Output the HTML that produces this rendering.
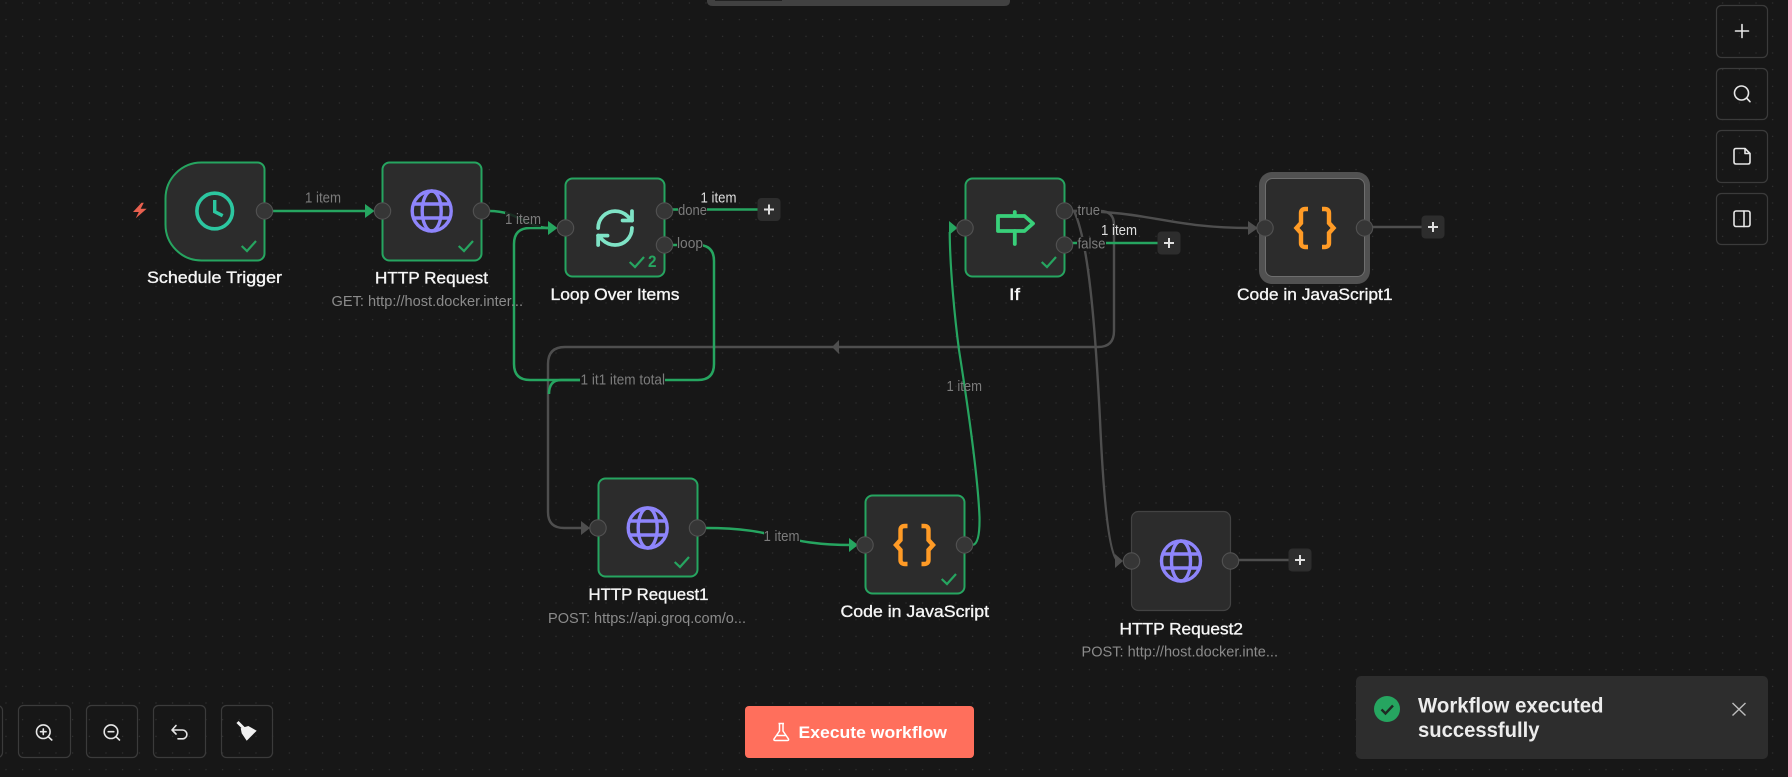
<!DOCTYPE html>
<html><head><meta charset="utf-8"><title>Workflow</title>
<style>
html,body{margin:0;padding:0;background:#171717;width:1792px;height:777px;overflow:hidden}
svg{display:block}
text{font-family:"Liberation Sans",sans-serif}
.n{fill:#2c2c2c;stroke:#26a560;stroke-width:2}
.h{fill:#363636;stroke:#525252;stroke-width:1.1}
.e{fill:none;stroke:#26a560;stroke-width:2.5}
.g{fill:none;stroke:#4e4e4e;stroke-width:2.4}
.t{font-size:17px;fill:#f6f6f6;stroke:#f6f6f6;stroke-width:.35}
.s{font-size:15px;fill:#8b8b8b}
.l{font-size:15px;fill:#7c7c7c}
.lw{font-size:15px;fill:#dedede}
.b{fill:none;stroke:#3b3b3b;stroke-width:1.2}
.i{fill:none;stroke:#e6e6e6;stroke-width:1.6;stroke-linecap:round;stroke-linejoin:round}
.p{fill:#2d2d2d}
.pi{stroke:#e0e0e0;stroke-width:2;fill:none}
</style></head>
<body>
<svg width="1792" height="777" viewBox="0 0 1792 777" xmlns="http://www.w3.org/2000/svg">
<defs>
<pattern id="d" width="16.667" height="16.667" patternUnits="userSpaceOnUse" x="5" y="2"><circle cx="1" cy="1" r=".6" fill="#383838"/></pattern>
<g id="ck"><polyline points="-14.3,-5 -9,0 0,-10" fill="none" stroke="#26a560" stroke-width="2.200"/></g>
<g id="globe" fill="none" stroke="#8e85fb" stroke-width="3.400"><ellipse cx="0" cy="0" rx="19.500" ry="20"/><ellipse cx="0" cy="0" rx="9.500" ry="20"/><path d="M-18 -7H18M-18 7H18"/></g>
<g id="br" fill="none" stroke="#ff9b26" stroke-width="4.400"><path d="M-7 -19H-9.500Q-14 -19 -14 -15V-5L-18.500 0L-14 5V15Q-14 19 -9.500 19H-7"/><path d="M7 -19H9.500Q14 -19 14 -15V-5L18.500 0L14 5V15Q14 19 9.500 19H7"/></g>
<g id="plus"><rect x="-11.500" y="-11.500" width="23" height="23" rx="4" class="p"/><path d="M-5 0H5M0 -5V5" class="pi"/></g>
</defs>
<rect width="1792" height="777" fill="#171717"/>
<rect width="1792" height="777" fill="url(#d)"/>

<!-- top bar -->
<path d="M707 0H1010V1Q1010 6 1004 6H713Q707 6 707 1Z" fill="#414141"/>
<rect x="715" y="0" width="67" height="1" fill="#222"/>

<!-- gray edges -->
<path class="g" d="M1072 211H1100Q1114 211 1114 225V331Q1114 347 1098 347H565Q548 347 548 364V512Q548 528 564 528H582"/>
<path class="g" d="M1072 211C1150 211 1170 228 1250 228"/>
<path class="g" d="M1074 211C1088 240 1095 320 1100 420C1104 510 1110 557 1118 561"/>
<path class="g" d="M1372 227H1422M1239 560H1289"/>
<polygon points="832,347 839,340 839,354" fill="#4e4e4e"/>
<polygon points="581,521 590,528 581,535" fill="#4e4e4e"/>
<polygon points="1248,221 1258,228 1248,235" fill="#4e4e4e"/>
<polygon points="1115,554 1123,561 1115,568" fill="#4e4e4e"/>

<!-- green edges -->
<path class="e" d="M272 211H366"/>
<polygon points="365,204 374.500,211 365,218" fill="#26a560"/>
<path class="e" d="M489 211C520 211 525 228 550 228"/>
<path class="e" d="M672 245H698Q714 245 714 261V364Q714 380 698 380H530Q514 380 514 364V244Q514 228 530 228H550"/>
<polygon points="548,221 557.500,228 548,235" fill="#26a560"/>
<path class="e" d="M580 380H561Q549 380 549 394"/>
<path class="e" d="M672 209.500H758"/>
<path class="e" d="M1072 243H1158"/>
<path class="e" d="M706 528C780 528 780 545 852 545"/>
<polygon points="849,538 858,545 849,552" fill="#26a560"/>
<path d="M973 545Q980 543 979.500 517C978 480 970 420 959 350C955 320 950 270 949.700 232" fill="none" stroke="#26a560" stroke-width="2.200"/>
<polygon points="949,221 957.500,228 949,235" fill="#26a560"/>

<!-- label backgrounds -->
<rect x="505" y="212" width="36" height="15" fill="#171717" opacity=".85"/>
<rect x="764" y="530" width="36" height="14" fill="#171717"/>
<rect x="580" y="373" width="85" height="15" fill="#171717"/>
<rect x="678" y="203" width="29" height="14" fill="#171717"/>
<rect x="677" y="238" width="26" height="14" fill="#171717"/>
<rect x="1077" y="204" width="24" height="14" fill="#171717"/>
<rect x="1077" y="237" width="29" height="14" fill="#171717"/>

<!-- nodes -->
<path class="n" d="M201.500 162.500H257.500A7 7 0 0 1 264.500 169.500V253.500A7 7 0 0 1 257.500 260.500H201.500A36 36 0 0 1 165.500 224.500V198.500A36 36 0 0 1 201.500 162.500Z"/>
<rect class="n" x="382.500" y="162.500" width="99" height="98" rx="7"/>
<rect class="n" x="565.500" y="178.500" width="99" height="98" rx="7"/>
<rect class="n" x="965.500" y="178.500" width="99" height="98" rx="7"/>
<rect x="1259" y="172" width="111" height="112" rx="13" fill="#515151"/>
<rect x="1265.500" y="178.500" width="99" height="98" rx="7" fill="#2c2c2c" stroke="#6e6e6e" stroke-width="1"/>
<rect class="n" x="598.500" y="478.500" width="99" height="98" rx="7"/>
<rect class="n" x="865.500" y="495.500" width="99" height="98" rx="7"/>
<rect x="1131.500" y="511.500" width="99" height="99" rx="7" fill="#2c2c2c" stroke="#434343" stroke-width="1.200"/>

<!-- handles -->
<g class="h">
<circle cx="264.500" cy="211" r="8.200"/><circle cx="382.500" cy="211" r="8.200"/><circle cx="481.500" cy="211" r="8.200"/>
<circle cx="565.500" cy="228" r="8.200"/><circle cx="664.500" cy="211" r="8.200"/><circle cx="664.500" cy="245" r="8.200"/>
<circle cx="965" cy="228" r="8.200"/><circle cx="1064.500" cy="211" r="8.200"/><circle cx="1064.500" cy="245" r="8.200"/>
<circle cx="1265" cy="228" r="8.200"/><circle cx="1364.500" cy="228" r="8.200"/>
<circle cx="598" cy="528" r="8.200"/><circle cx="697.500" cy="528" r="8.200"/>
<circle cx="865" cy="545" r="8.200"/><circle cx="964.500" cy="545" r="8.200"/>
<circle cx="1131.500" cy="561" r="8.200"/><circle cx="1230.500" cy="561" r="8.200"/>
</g>

<!-- checks -->
<use href="#ck" x="256" y="251"/><use href="#ck" x="473" y="251"/><use href="#ck" x="644" y="267"/>
<use href="#ck" x="1056" y="267"/><use href="#ck" x="689" y="567"/><use href="#ck" x="956" y="584"/>
<text x="648" y="267" fill="#26a560" style="font-size:17px;font-weight:700" textLength="8.500" lengthAdjust="spacingAndGlyphs">2</text>

<!-- node icons -->
<path d="M141.500 202.700L133 212H138.800L135.800 218.200L146.700 208.800H140.700L143.800 202.700Z" fill="#e8604f"/>
<circle cx="214.700" cy="211" r="17.800" fill="none" stroke="#2cc6a0" stroke-width="3.600"/>
<path d="M214.700 200V211.700L222.700 215.700" fill="none" stroke="#2cc6a0" stroke-width="3.400"/>
<use href="#globe" x="431.700" y="211"/>
<use href="#globe" x="647.700" y="528"/>
<use href="#globe" x="1181" y="561"/>
<g transform="translate(592.500 205.500) scale(1.880)" fill="none" stroke="#7fe3c6" stroke-width="2" stroke-linecap="round" stroke-linejoin="round">
<path d="M3 12a9 9 0 0 1 9-9 9.750 9.750 0 0 1 6.740 2.740L21 8"/><path d="M21 3v5h-5"/><path d="M21 12a9 9 0 0 1-9 9 9.750 9.750 0 0 1-6.740-2.740L3 16"/><path d="M8 16H3v5"/></g>
<g fill="none" stroke="#39d07a" stroke-width="3.800" stroke-linecap="round" stroke-linejoin="round">
<path d="M1014.800 212V216M1014.800 231V244"/>
<path d="M998 216H1024.500L1033 223.500L1024.500 231H998Z"/>
</g>
<use href="#br" x="1315" y="228"/>
<use href="#br" x="914.500" y="545"/>

<!-- plus -->
<use href="#plus" x="769" y="209.500"/>
<use href="#plus" x="1169" y="243"/>
<use href="#plus" x="1433" y="227"/>
<use href="#plus" x="1300" y="560"/>

<!-- node titles -->
<text class="t" x="147" y="283" textLength="135" lengthAdjust="spacingAndGlyphs">Schedule Trigger</text>
<text class="t" x="375" y="283.500" textLength="113" lengthAdjust="spacingAndGlyphs">HTTP Request</text>
<text class="s" x="331.500" y="306" textLength="191.500" lengthAdjust="spacingAndGlyphs">GET: http://host.docker.inter...</text>
<text class="t" x="550.500" y="300" textLength="129" lengthAdjust="spacingAndGlyphs">Loop Over Items</text>
<text class="t" x="1009" y="300" textLength="11" lengthAdjust="spacingAndGlyphs">If</text>
<text class="t" x="1237" y="300" textLength="155.500" lengthAdjust="spacingAndGlyphs">Code in JavaScript1</text>
<text class="t" x="588.500" y="600" textLength="120" lengthAdjust="spacingAndGlyphs">HTTP Request1</text>
<text class="s" x="548" y="623" textLength="198" lengthAdjust="spacingAndGlyphs">POST: https://api.groq.com/o...</text>
<text class="t" x="840.500" y="617" textLength="148.500" lengthAdjust="spacingAndGlyphs">Code in JavaScript</text>
<text class="t" x="1119.500" y="634.500" textLength="123.500" lengthAdjust="spacingAndGlyphs">HTTP Request2</text>
<text class="s" x="1081.500" y="656.500" textLength="196.500" lengthAdjust="spacingAndGlyphs">POST: http://host.docker.inte...</text>

<!-- edge labels -->
<text class="l" x="305" y="202.500" textLength="36" lengthAdjust="spacingAndGlyphs">1 item</text>
<text class="l" x="505" y="224" textLength="36" lengthAdjust="spacingAndGlyphs">1 item</text>
<text class="lw" x="700.500" y="202.500" textLength="36" lengthAdjust="spacingAndGlyphs">1 item</text>
<text class="l" x="678" y="215" textLength="29" lengthAdjust="spacingAndGlyphs">done</text>
<text class="l" x="677" y="248" textLength="26" lengthAdjust="spacingAndGlyphs">loop</text>
<text class="l" x="1077.500" y="215" textLength="22.500" lengthAdjust="spacingAndGlyphs">true</text>
<text class="l" x="1077.500" y="248.500" textLength="28" lengthAdjust="spacingAndGlyphs">false</text>
<text class="lw" x="1101" y="235" textLength="36" lengthAdjust="spacingAndGlyphs">1 item</text>
<text class="l" x="580.500" y="384.500" textLength="84.500" lengthAdjust="spacingAndGlyphs">1 it1 item total</text>
<text class="l" x="946.500" y="391" textLength="35.500" lengthAdjust="spacingAndGlyphs">1 item</text>
<text class="l" x="763.500" y="541" textLength="36" lengthAdjust="spacingAndGlyphs">1 item</text>

<!-- right toolbar -->
<rect class="b" x="1716.500" y="5.500" width="51" height="52" rx="5"/>
<rect class="b" x="1716.500" y="68.500" width="51" height="51" rx="5"/>
<rect class="b" x="1716.500" y="130.500" width="51" height="52" rx="5"/>
<rect class="b" x="1716.500" y="193.500" width="51" height="51" rx="5"/>
<path class="i" d="M1735.500 31H1748.500M1742 24.500V37.500"/>
<circle class="i" cx="1741.500" cy="93" r="7"/><path class="i" d="M1746.700 98.200L1750 101.700"/>
<path class="i" d="M1736 148.500H1745L1750 153.500V162Q1750 164 1748 164H1736Q1734 164 1734 162V150.500Q1734 148.500 1736 148.500ZM1745 148.500V153.500H1750"/>
<rect class="i" x="1734" y="211" width="16" height="15.500" rx="2"/><path class="i" d="M1744 211V226.500"/>

<!-- bottom left toolbar -->
<rect class="b" x="-20" y="705.500" width="22.500" height="52" rx="5"/>
<rect class="b" x="18.500" y="705.500" width="52" height="52" rx="5"/>
<rect class="b" x="86.500" y="705.500" width="51" height="52" rx="5"/>
<rect class="b" x="153.500" y="705.500" width="52" height="52" rx="5"/>
<rect class="b" x="221.500" y="705.500" width="51" height="52" rx="5"/>
<circle class="i" cx="43.300" cy="731.700" r="6.800"/><path class="i" d="M48.200 736.700L51.800 740M40.500 731.700H46.100M43.300 728.900V734.500"/>
<circle class="i" cx="111" cy="731.700" r="6.800"/><path class="i" d="M116 736.700L119.500 740M108.200 731.700H113.800"/>
<path class="i" d="M176 725.500L172 730L176 734M172 730H182.500A4.300 4.300 0 0 1 182.500 738.800H178"/>
<path d="M240.700 728.300L248.300 726L256.700 730.700L246.700 740.700L241.700 733.300Z" fill="#f0f0f0"/>
<path d="M237.500 722L244 728.500" stroke="#f0f0f0" stroke-width="3" fill="none"/>

<!-- execute -->
<rect x="745" y="706" width="229" height="52" rx="4" fill="#ff6f5c"/>
<path d="M778.500 723.500H784M779.500 723.500V731L774 739Q773.500 740.500 775 740.500H787.500Q789 740.500 788.500 739L783 731V723.500M776.500 735.500H786" fill="none" stroke="#fff" stroke-width="1.500" stroke-linejoin="round"/>
<text x="798.500" y="738" textLength="148.500" lengthAdjust="spacingAndGlyphs" style="font-size:17px;font-weight:700" fill="#fff">Execute workflow</text>

<!-- toast -->
<rect x="1356" y="676" width="412" height="83" rx="5" fill="#2d2d2d"/>
<circle cx="1387" cy="709" r="13" fill="#26a560"/>
<path d="M1381.500 709.500L1385.500 713.500L1393 705.500" fill="none" stroke="#1f2a24" stroke-width="2.400"/>
<text x="1418" y="712.500" textLength="185.500" lengthAdjust="spacingAndGlyphs" style="font-size:21px;font-weight:700" fill="#ececec">Workflow executed</text>
<text x="1418" y="737" textLength="121.500" lengthAdjust="spacingAndGlyphs" style="font-size:21px;font-weight:700" fill="#ececec">successfully</text>
<path d="M1732.500 703L1745.500 715.500M1745.500 703L1732.500 715.500" stroke="#bdbdbd" stroke-width="1.400" fill="none"/>

<!-- right strip -->
<rect x="1788" y="0" width="4" height="777" fill="#fbb6ce"/>
</svg>
</body></html>
